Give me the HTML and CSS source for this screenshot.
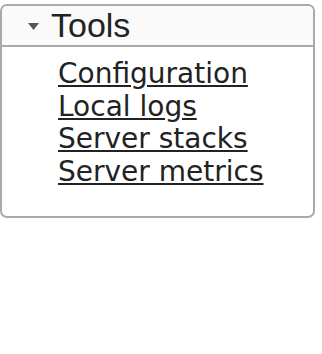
FILE: index.html
```html
<!DOCTYPE html>
<html lang="en-US">
<head>
    <meta charset="utf-8">
    <title>Tools</title>
    <link rel="stylesheet" href="styles.css">
</head>
<body>
    <div class="panel">
        <div class="panel-header">
            <svg class="caret" width="11" height="7" viewBox="0 0 11 7">
                <path d="M0 0 L11 0 L5.5 7 Z" fill="#555"/>
            </svg>
            <span class="panel-title">Tools</span>
        </div>
        <ul class="links">
            <li><a href="#">Configuration</a></li>
            <li><a href="#">Local logs</a></li>
            <li><a href="#">Server stacks</a></li>
            <li><a href="#">Server metrics</a></li>
        </ul>
    </div>
</body>
</html>
```

FILE: styles.css
```css
body {
    margin: 0;
    padding: 4px 0 0 0;
    background-color: #ffffff;
    color: #222;
}

.panel {
    width: 311px;
    border: 2px solid #aaa;
    border-radius: 7px;
    overflow: hidden;
}

.panel-header {
    display: flex;
    align-items: center;
    height: 39px;
    padding-left: 26px;
    background-color: #fafafa;
    border-bottom: 2px solid #aaa;
}

.caret {
    margin-right: 12px;
    margin-top: 1px;
}

.panel-title {
    font-family: "Liberation Sans", Arial, sans-serif;
    font-size: 34px;
    line-height: 39px;
    color: #222;
}

.links {
    list-style: none;
    margin: 0;
    padding: 11px 0 28px 56px;
    font-family: "DejaVu Sans", Verdana, sans-serif;
    font-size: 28px;
    line-height: 32.5px;
}

.links a {
    color: #222;
    text-decoration: underline;
}
```
